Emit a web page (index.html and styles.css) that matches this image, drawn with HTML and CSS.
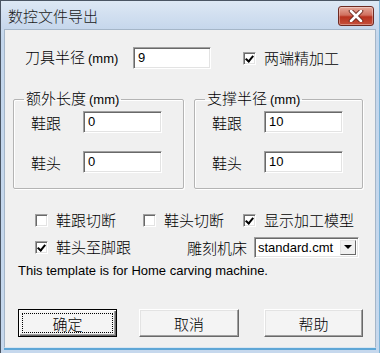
FILE: index.html
```html
<!DOCTYPE html>
<html lang="zh-CN">
<head>
  <meta charset="UTF-8">
  <title>数控文件导出</title>
  <link rel="stylesheet" href="styles.css">
</head>
<body>
  <div class="window">
    <div class="titlebar">
      <span class="title">数控文件导出</span>
      <div class="close">
        <svg width="16" height="12" viewBox="0 0 16 12">
          <path d="M3 1 L13 11 M13 1 L3 11" stroke="#6b2a20" stroke-width="4.5" stroke-linecap="round"/>
          <path d="M3 1 L13 11 M13 1 L3 11" stroke="#fff" stroke-width="2.6" stroke-linecap="round"/>
        </svg>
      </div>
    </div>
    <div class="client">
      <div class="row-top">
        <span class="label-main">刀具半径<small>(mm)</small></span>
        <div class="field w78">9</div>
        <label class="check top-check"><span class="cb checked"></span>两端精加工</label>
      </div>

      <div class="groups">
        <fieldset class="group g1">
          <legend>额外长度<small>(mm)</small></legend>
          <div class="grow"><span class="glabel">鞋跟</span><div class="field w79">0</div></div>
          <div class="grow"><span class="glabel">鞋头</span><div class="field w79">0</div></div>
        </fieldset>
        <fieldset class="group g2">
          <legend>支撑半径<small>(mm)</small></legend>
          <div class="grow"><span class="glabel">鞋跟</span><div class="field w79">10</div></div>
          <div class="grow"><span class="glabel">鞋头</span><div class="field w79">10</div></div>
        </fieldset>
      </div>

      <div class="row-a">
        <label class="check c1"><span class="cb"></span>鞋跟切断</label>
        <label class="check c2"><span class="cb"></span>鞋头切断</label>
        <label class="check"><span class="cb checked"></span>显示加工模型</label>
      </div>

      <div class="row-b">
        <label class="check c3"><span class="cb checked"></span>鞋头至脚跟</label>
        <span class="machine">雕刻机床</span>
        <div class="select">
          <span class="select-text">standard.cmt</span>
          <span class="select-btn"></span>
        </div>
      </div>

      <div class="note">This template is for Home carving machine.</div>

      <div class="buttons">
        <button class="btn default"><span>确定</span></button>
        <button class="btn cancel"><span>取消</span></button>
        <button class="btn help"><span>帮助</span></button>
      </div>
    </div>
  </div>
</body>
</html>
```

FILE: styles.css
```css
html, body{
  margin: 0;
  padding: 0;
}
body{
  width: 380px;
  height: 353px;
  overflow: hidden;
  font-family: "Noto Sans CJK SC", "Liberation Sans", sans-serif;
  font-size: 15px;
  font-weight: 300;
  color: #000;
}
small{
  font-family: "Liberation Sans", sans-serif;
  font-size: 13px;
  font-weight: 400;
  margin-left: 3px;
}
.window{
  width: 380px;
  height: 353px;
  box-sizing: border-box;
  border-left: 1px solid #4a5563;
  border-top: 1px solid #4a5563;
  border-right: 1px solid #7eb4d8;
  background: linear-gradient(#d4e2f2, #c3d6ec 40px, #c6d8ed);
  display: flex;
  flex-direction: column;
}
.titlebar{
  height: 28px;
  display: flex;
  align-items: center;
  justify-content: space-between;
  padding: 0 5px 0 7px;
  background: linear-gradient(#dde8f4, #c6d7ec);
}
.title{
  font-size: 15px;
  line-height: 20px;
  color: #1a1a1a;
  margin-top: 1px;
}
.close{
  width: 34px;
  height: 18px;
  margin-top: 1px;
  border: 1px solid #6e2a22;
  border-radius: 3px;
  background: linear-gradient(#e6a99c, #d0705f 45%, #b8321f 55%, #c5513c);
  box-shadow: inset 0 0 0 1px rgba(255,255,255,.35);
  display: flex;
  align-items: center;
  justify-content: center;
}
.client{
  flex: 1;
  margin: 0 3px 5px 3px;
  background: #f0f0f0;
  border: 1px solid #a5b6c8;
  border-bottom: 1px solid #d8e6f2;
  box-shadow: 0 2px 0 #5ea6d6;
  padding-top: 17px;
  display: flex;
  flex-direction: column;
}

/* first row */
.row-top{
  display: flex;
  align-items: center;
  height: 22px;
  padding-left: 20px;
}
.label-main{
  width: 108px;
  line-height: 20px;
}
.field{
  box-sizing: border-box;
  height: 22px;
  background: #fff;
  border: 1px solid;
  border-color: #a0a0a0 #fff #fff #a0a0a0;
  box-shadow: inset 1px 1px #696969, inset -1px -1px #e3e3e3;
  font-family: "Liberation Sans", sans-serif;
  font-size: 13px;
  font-weight: 400;
  line-height: 20px;
  padding-left: 4px;
}
.w78{ width: 78px; }
.w79{ width: 79px; }
.check{
  display: flex;
  align-items: center;
  line-height: 20px;
}
.top-check{
  margin-left: 32px;
}
.cb{
  box-sizing: border-box;
  width: 13px;
  height: 13px;
  background: #fff;
  border: 1px solid;
  border-color: #a0a0a0 #fff #fff #a0a0a0;
  box-shadow: inset 1px 1px #696969, inset -1px -1px #e3e3e3;
  margin-right: 8px;
  position: relative;
}
.cb.checked::after{
  content: "";
  position: absolute;
  left: 3px;
  top: 1px;
  width: 3px;
  height: 6px;
  border-right: 2px solid #000;
  border-bottom: 2px solid #000;
  transform: rotate(40deg);
}

/* group boxes */
.groups{
  display: flex;
  gap: 10px;
  margin-top: 19px;
  padding-left: 8px;
}
.group{
  box-sizing: border-box;
  margin: 0;
  height: 101px;
  border: 1px solid #b4b4b4;
  border-radius: 2px;
  box-shadow: inset 1px 1px #fff, 1px 1px #fff;
  padding: 1px 0 0 17px;
  display: flex;
  flex-direction: column;
  gap: 18px;
}
.g1{ width: 171px; }
.g2{ width: 169px; }
.group legend{
  padding: 0 2px;
  margin-left: -7px;
  line-height: 20px;
}
.grow{
  display: flex;
  align-items: center;
  height: 22px;
}
.glabel{
  width: 52px;
}

/* checkbox rows */
.row-a{
  display: flex;
  align-items: center;
  height: 16px;
  margin-top: 23px;
  padding-left: 30px;
}
.c1{ width: 108px; }
.c2{ width: 100px; }
.row-b{
  display: flex;
  align-items: center;
  height: 20px;
  margin-top: 9px;
  padding-left: 30px;
}
.c3{ width: 152px; }
.machine{
  width: 67px;
}
.select{
  box-sizing: border-box;
  width: 105px;
  height: 21px;
  background: #fff;
  border: 1px solid;
  border-color: #a0a0a0 #fff #fff #a0a0a0;
  box-shadow: inset 1px 1px #696969, inset -1px -1px #e3e3e3;
  display: flex;
  align-items: center;
  padding: 2px 2px 2px 3px;
}
.select-text{
  flex: 1;
  font-family: "Liberation Sans", sans-serif;
  font-size: 13px;
  font-weight: 400;
  line-height: 17px;
}
.select-btn{
  box-sizing: border-box;
  width: 16px;
  height: 15px;
  background: #f0f0f0;
  border: 1px solid;
  border-color: #e3e3e3 #696969 #696969 #e3e3e3;
  display: flex;
  align-items: center;
  justify-content: center;
}
.select-btn::before{
  content: "";
  border-left: 4px solid transparent;
  border-right: 4px solid transparent;
  border-top: 4px solid #000;
}

.note{
  margin-top: 6px;
  padding-left: 13px;
  font-family: "Liberation Sans", sans-serif;
  font-size: 13px;
  font-weight: 400;
  line-height: 16px;
}

/* buttons */
.buttons{
  display: flex;
  margin-top: 30px;
  padding-left: 13px;
}
.btn{
  box-sizing: border-box;
  width: 100px;
  height: 28px;
  padding: 0;
  font-family: "Noto Sans CJK SC", sans-serif;
  font-size: 15px;
  font-weight: 300;
  color: #000;
  background: #f4f4f4;
  border: 1px solid;
  border-color: #fff #696969 #696969 #fff;
  box-shadow: inset -1px -1px #a0a0a0, inset 1px 1px #e3e3e3;
  display: flex;
  align-items: center;
  justify-content: center;
}
.btn.cancel{ margin-left: 22px; }
.btn.help{ margin-left: 25px; width: 99px; }
.btn.default{
  width: 99px;
  border: 1px solid #000;
  box-shadow: inset 1px 1px #fff, inset -1px -1px #696969, inset -2px -2px #a0a0a0;
  padding: 3px;
}
.btn.default span{
  flex: 1;
  align-self: stretch;
  display: flex;
  align-items: center;
  justify-content: center;
  border: 1px dotted #000;
}
```
